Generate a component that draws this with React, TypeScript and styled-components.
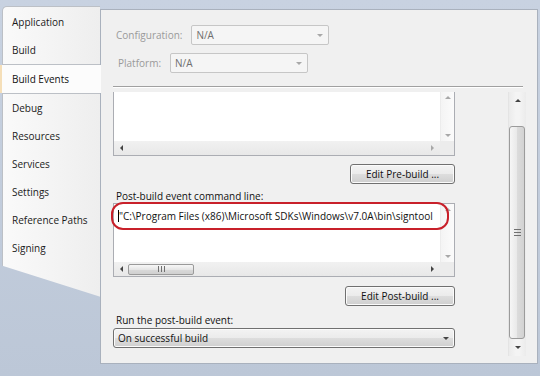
import React from 'react';
import styled, { createGlobalStyle } from 'styled-components';

const GlobalStyle = createGlobalStyle`
  html, body { margin: 0; padding: 0; }
  body {
    font-family: 'Open Sans', 'Noto Sans', sans-serif;
    font-size: 10px;
    color: #1b1b1b;
  }
`;

type Dir = 'up' | 'down' | 'left' | 'right';

const tabs = ['Application', 'Build', 'Build Events', 'Debug', 'Resources', 'Services', 'Settings', 'Reference Paths', 'Signing'];
const selected = 2;

const Arrow = ({ dir, dim }: { dir: Dir; dim?: boolean }) => <Tri $dir={dir} $dim={dim} />;

const App = () => {
  return (
    <Window>
      <GlobalStyle />
      <TabColumn>
        <TabGroup $first>
          {tabs.slice(0, selected).map((t) => (
            <Tab key={t}>{t}</Tab>
          ))}
        </TabGroup>
        <ActiveTab>{tabs[selected]}</ActiveTab>
        <TabGroup>
          {tabs.slice(selected + 1).map((t) => (
            <Tab key={t}>{t}</Tab>
          ))}
        </TabGroup>
      </TabColumn>

      <Panel>
        <Header>
          <FieldRow>
            <DimLabel>Configuration:</DimLabel>
            <DimSelect>
              N/A
              <Arrow dir="down" dim />
            </DimSelect>
          </FieldRow>
          <FieldRow $indent>
            <DimLabel>Platform:</DimLabel>
            <DimSelect>
              N/A
              <Arrow dir="down" dim />
            </DimSelect>
          </FieldRow>
        </Header>
        <Separator />

        <Body>
          <Content>
            <ScrollBox $cut $area={49}>
              <TextArea />
              <VBar>
                <Arrow dir="up" dim />
                <Arrow dir="down" dim />
              </VBar>
              <HBar>
                <Arrow dir="left" />
                <Arrow dir="right" dim />
              </HBar>
              <Corner />
            </ScrollBox>
            <Button $w={105} $gap={8}>Edit Pre-build ...</Button>

            <Label $gap={6}>Post-build event command line:</Label>
            <ScrollBox $area={58}>
              <TextArea>
                <Caret />
                "C:\Program Files (x86)\Microsoft SDKs\Windows\v7.0A\bin\signtool
              </TextArea>
              <VBar>
                <Arrow dir="up" dim />
                <Arrow dir="down" dim />
              </VBar>
              <HBar>
                <Arrow dir="left" />
                <HThumb>
                  <Grip $vertical />
                </HThumb>
                <Arrow dir="right" />
              </HBar>
              <Corner />
              <Highlight />
            </ScrollBox>
            <Button $w={110} $gap={9}>Edit Post-build ...</Button>

            <Label $gap={8}>Run the post-build event:</Label>
            <Combo>
              On successful build
              <Arrow dir="down" />
            </Combo>
          </Content>

          <MainScroll>
            <ScrollButton>
              <Arrow dir="up" />
            </ScrollButton>
            <Track>
              <VThumb>
                <Grip />
              </VThumb>
            </Track>
            <ScrollButton>
              <Arrow dir="down" />
            </ScrollButton>
          </MainScroll>
        </Body>
      </Panel>
    </Window>
  );
};

const Window = styled.div`
  width: 540px;
  height: 376px;
  display: flex;
  overflow: hidden;
  background: linear-gradient(#c8d2e1, #bcc7d7);
`;

const TabColumn = styled.div`
  width: 101px;
  flex: none;
  height: 291px;
  margin-top: 6px;
  display: flex;
  flex-direction: column;
  position: relative;
  z-index: 1;
  clip-path: polygon(0 0, 100% 0, 100% 100%, 0 calc(100% - 32px));
`;

const TabGroup = styled.div<{ $first?: boolean }>`
  margin: 0 1px 0 2px;
  border: 1px solid #bcc0c6;
  border-right: none;
  border-radius: ${(p) => (p.$first ? '5px 0 0 0' : '0')};
  background: linear-gradient(90deg, #fafafa, #eeeeee);
  padding-top: ${(p) => (p.$first ? '1px' : '0')};
  ${(p) => (p.$first ? '' : 'flex: 1; border-bottom: none;')}
`;

const Tab = styled.div`
  height: 28px;
  line-height: 28px;
  padding-left: 9px;
  white-space: nowrap;
  color: #1b1b1b;
`;

const ActiveTab = styled.div`
  height: 28px;
  line-height: 28px;
  padding-left: 10px;
  border-left: 2px solid #f5dfb9;
  background: #fcfcfc;
  color: #111;
  white-space: nowrap;
`;

const Panel = styled.div`
  flex: 1;
  min-width: 0;
  margin: 9px 2px 12px -1px;
  border: 1px solid #a9b1bd;
  background: #f0f0f0;
  display: flex;
  flex-direction: column;
`;

const Header = styled.div`
  height: 76px;
  box-sizing: border-box;
  padding: 15px 0 0 15px;
  display: flex;
  flex-direction: column;
  gap: 8px;
`;

const FieldRow = styled.div<{ $indent?: boolean }>`
  display: flex;
  align-items: center;
  gap: 9px;
  padding-left: ${(p) => (p.$indent ? '2px' : '0')};
`;

const DimLabel = styled.span`
  color: #9a9a9a;
`;

const DimSelect = styled.div`
  width: 138px;
  height: 20px;
  box-sizing: border-box;
  border: 1px solid #c6c6c6;
  border-radius: 2px;
  background: #f5f5f5;
  color: #6e6e6e;
  display: flex;
  align-items: center;
  justify-content: space-between;
  padding: 0 5px 0 4px;
`;

const Separator = styled.div`
  margin: 0 14px 0 12px;
  border-top: 1px solid #a0a0a0;
  border-bottom: 1px solid #ffffff;
`;

const Body = styled.div`
  flex: 1;
  min-height: 0;
  display: flex;
  padding: 0 11px 0 12px;
  overflow: hidden;
`;

const Content = styled.div`
  width: 342px;
  padding-top: 4px;
  display: flex;
  flex-direction: column;
`;

const ScrollBox = styled.div<{ $cut?: boolean; $area: number }>`
  position: relative;
  display: grid;
  grid-template-columns: 1fr 14px;
  grid-template-rows: ${(p) => p.$area}px 14px;
  border: 1px solid #abadb3;
  ${(p) => (p.$cut ? 'border-top: none;' : '')}
  background: #fff;
`;

const TextArea = styled.div`
  background: #fff;
  padding: 6px 0 0 4px;
  white-space: nowrap;
  overflow: hidden;
  color: #111;
  line-height: 13px;
`;

const Caret = styled.span`
  display: inline-block;
  width: 1px;
  height: 12px;
  background: #000;
  vertical-align: -2px;
`;

const VBar = styled.div`
  background: linear-gradient(90deg, #f4f4f4, #fbfbfb);
  border-left: 1px solid #ececec;
  display: flex;
  flex-direction: column;
  justify-content: space-between;
  align-items: center;
  padding: 4px 0;
`;

const HBar = styled.div`
  background: linear-gradient(#f1f1f1, #e8e8e8);
  display: flex;
  align-items: center;
  padding: 0 6px 0 6px;
  gap: 5px;
  & > :last-child {
    margin-left: auto;
  }
`;

const HThumb = styled.div`
  width: 66px;
  height: 11px;
  box-sizing: border-box;
  border: 1px solid #9a9a9a;
  border-radius: 2px;
  background: linear-gradient(#f7f7f7, #e6e6e6 50%, #d9d9d9 51%, #d0d0d0);
  display: flex;
  align-items: center;
  justify-content: center;
`;

const Corner = styled.div`
  background: #ececec;
`;

const Highlight = styled.div`
  position: absolute;
  left: -3px;
  top: -2px;
  width: 338px;
  height: 28px;
  box-sizing: border-box;
  border: 2px solid #c8202a;
  border-radius: 12px;
  pointer-events: none;
`;

const Button = styled.div<{ $w: number; $gap: number }>`
  align-self: flex-end;
  width: ${(p) => p.$w}px;
  height: 20px;
  margin-top: ${(p) => p.$gap}px;
  box-sizing: border-box;
  border: 1px solid #707070;
  border-radius: 3px;
  background: linear-gradient(#f3f3f3, #ebebeb 50%, #dddddd 51%, #cfcfcf);
  box-shadow: inset 0 0 0 1px #fbfbfb;
  display: flex;
  align-items: center;
  justify-content: center;
  color: #111;
`;

const Label = styled.div<{ $gap: number }>`
  margin-top: ${(p) => p.$gap}px;
  padding-left: 3px;
  line-height: 13px;
  color: #111;
`;

const Combo = styled.div`
  margin-top: 1px;
  height: 20px;
  box-sizing: border-box;
  border: 1px solid #707070;
  border-radius: 3px;
  background: linear-gradient(#f3f3f3, #ebebeb 50%, #dddddd 51%, #cfcfcf);
  box-shadow: inset 0 0 0 1px #fbfbfb;
  display: flex;
  align-items: center;
  justify-content: space-between;
  padding: 0 5px 0 4px;
  color: #111;
`;

const MainScroll = styled.div`
  margin: 4px 0 7px auto;
  width: 17px;
  display: flex;
  flex-direction: column;
  background: linear-gradient(90deg, #ebebeb, #f4f4f4 40%, #f4f4f4 60%, #ebebeb);
  border-left: 1px solid #e4e4e4;
`;

const ScrollButton = styled.div`
  height: 17px;
  flex: none;
  display: flex;
  align-items: center;
  justify-content: center;
`;

const Track = styled.div`
  flex: 1;
  display: flex;
  flex-direction: column;
  padding-top: 17px;
`;

const VThumb = styled.div`
  flex: 1;
  margin: 0 1px 0 0;
  border: 1px solid #9b9b9b;
  border-radius: 3px;
  background: linear-gradient(90deg, #f6f6f6, #e9e9e9 50%, #dcdcdc 51%, #d2d2d2);
  display: flex;
  align-items: center;
  justify-content: center;
`;

const Grip = styled.div<{ $vertical?: boolean }>`
  width: 7px;
  height: ${(p) => (p.$vertical ? '6px' : '7px')};
  background: ${(p) =>
    p.$vertical
      ? 'repeating-linear-gradient(90deg, #707070 0 1px, transparent 1px 3px)'
      : 'repeating-linear-gradient(#707070 0 1px, transparent 1px 3px)'};
`;

const Tri = styled.span<{ $dir: Dir; $dim?: boolean }>`
  display: inline-block;
  width: 0;
  height: 0;
  border: 3px solid transparent;
  ${(p) => {
    const c = p.$dim ? '#a8a8a8' : '#444';
    switch (p.$dir) {
      case 'up':
        return `border-bottom: 3px solid ${c}; border-top-width: 0; border-left-width: 3.5px; border-right-width: 3.5px;`;
      case 'down':
        return `border-top: 3px solid ${c}; border-bottom-width: 0; border-left-width: 3.5px; border-right-width: 3.5px;`;
      case 'left':
        return `border-right: 3px solid ${c}; border-left-width: 0; border-top-width: 3.5px; border-bottom-width: 3.5px;`;
      default:
        return `border-left: 3px solid ${c}; border-right-width: 0; border-top-width: 3.5px; border-bottom-width: 3.5px;`;
    }
  }}
`;

export default App;
